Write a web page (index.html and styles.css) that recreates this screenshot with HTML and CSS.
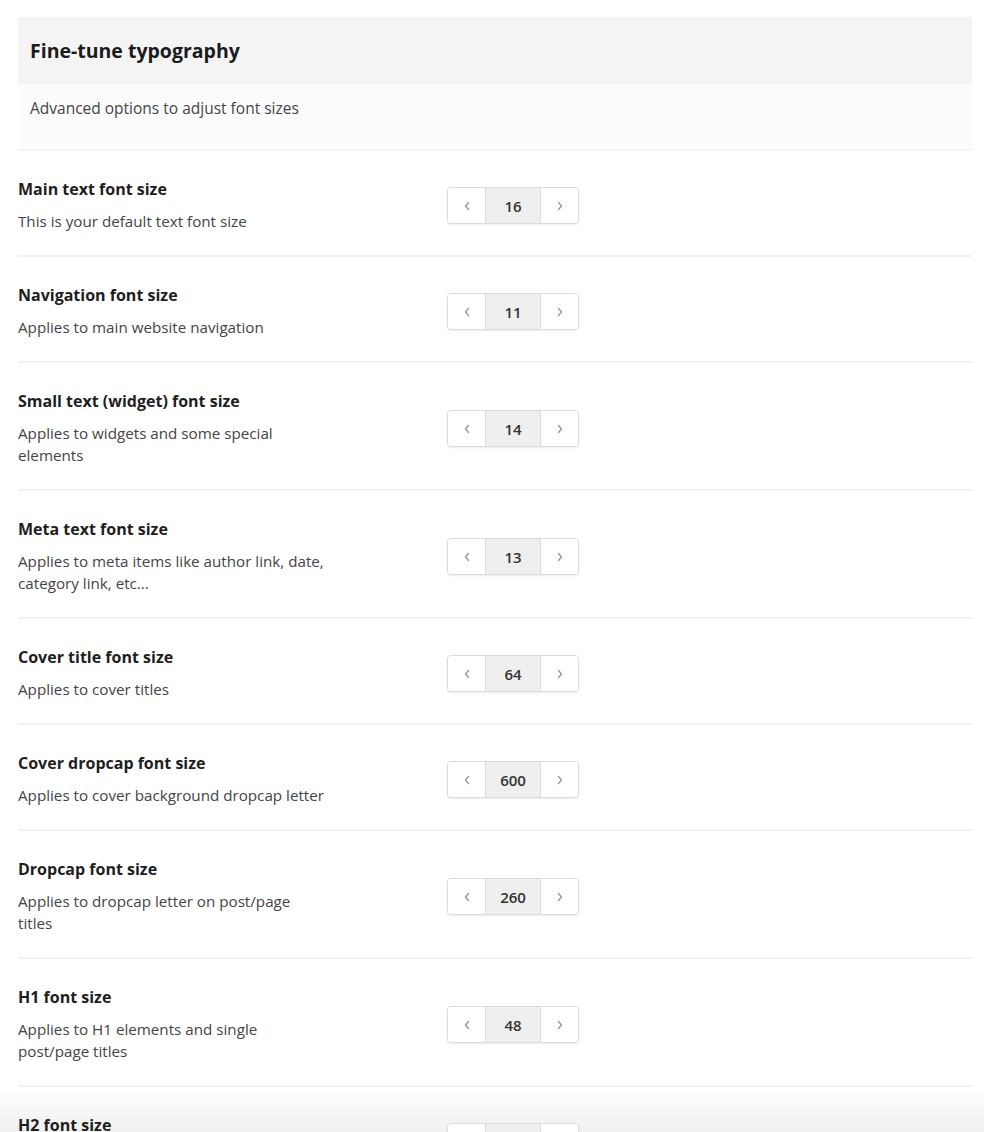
FILE: index.html
```html
<!DOCTYPE html>
<html lang="en">
<head>
<meta charset="utf-8">
<title>Fine-tune typography</title>
<link rel="stylesheet" href="styles.css">
</head>
<body>
<section class="panel">
  <header class="panel-head">
    <h2 class="panel-title">Fine-tune typography</h2>
  </header>
  <p class="panel-intro">Advanced options to adjust font sizes</p>

  <div class="setting">
    <div class="setting-text">
      <h3 class="setting-name">Main text font size</h3>
      <p class="setting-desc">This is your default text font size</p>
    </div>
    <div class="stepper">
      <button class="step-btn" aria-label="Decrease"><svg viewBox="0 0 8 10" class="chev"><path d="M5.5 1.5 L2.5 5 L5.5 8.5"/></svg></button>
      <span class="step-value">16</span>
      <button class="step-btn" aria-label="Increase"><svg viewBox="0 0 8 10" class="chev"><path d="M2.5 1.5 L5.5 5 L2.5 8.5"/></svg></button>
    </div>
  </div>

  <div class="setting">
    <div class="setting-text">
      <h3 class="setting-name">Navigation font size</h3>
      <p class="setting-desc">Applies to main website navigation</p>
    </div>
    <div class="stepper">
      <button class="step-btn" aria-label="Decrease"><svg viewBox="0 0 8 10" class="chev"><path d="M5.5 1.5 L2.5 5 L5.5 8.5"/></svg></button>
      <span class="step-value">11</span>
      <button class="step-btn" aria-label="Increase"><svg viewBox="0 0 8 10" class="chev"><path d="M2.5 1.5 L5.5 5 L2.5 8.5"/></svg></button>
    </div>
  </div>

  <div class="setting">
    <div class="setting-text">
      <h3 class="setting-name">Small text (widget) font size</h3>
      <p class="setting-desc">Applies to widgets and some special elements</p>
    </div>
    <div class="stepper">
      <button class="step-btn" aria-label="Decrease"><svg viewBox="0 0 8 10" class="chev"><path d="M5.5 1.5 L2.5 5 L5.5 8.5"/></svg></button>
      <span class="step-value">14</span>
      <button class="step-btn" aria-label="Increase"><svg viewBox="0 0 8 10" class="chev"><path d="M2.5 1.5 L5.5 5 L2.5 8.5"/></svg></button>
    </div>
  </div>

  <div class="setting">
    <div class="setting-text">
      <h3 class="setting-name">Meta text font size</h3>
      <p class="setting-desc">Applies to meta items like author link, date, category link, etc...</p>
    </div>
    <div class="stepper">
      <button class="step-btn" aria-label="Decrease"><svg viewBox="0 0 8 10" class="chev"><path d="M5.5 1.5 L2.5 5 L5.5 8.5"/></svg></button>
      <span class="step-value">13</span>
      <button class="step-btn" aria-label="Increase"><svg viewBox="0 0 8 10" class="chev"><path d="M2.5 1.5 L5.5 5 L2.5 8.5"/></svg></button>
    </div>
  </div>

  <div class="setting">
    <div class="setting-text">
      <h3 class="setting-name">Cover title font size</h3>
      <p class="setting-desc">Applies to cover titles</p>
    </div>
    <div class="stepper">
      <button class="step-btn" aria-label="Decrease"><svg viewBox="0 0 8 10" class="chev"><path d="M5.5 1.5 L2.5 5 L5.5 8.5"/></svg></button>
      <span class="step-value">64</span>
      <button class="step-btn" aria-label="Increase"><svg viewBox="0 0 8 10" class="chev"><path d="M2.5 1.5 L5.5 5 L2.5 8.5"/></svg></button>
    </div>
  </div>

  <div class="setting">
    <div class="setting-text">
      <h3 class="setting-name">Cover dropcap font size</h3>
      <p class="setting-desc">Applies to cover background dropcap letter</p>
    </div>
    <div class="stepper">
      <button class="step-btn" aria-label="Decrease"><svg viewBox="0 0 8 10" class="chev"><path d="M5.5 1.5 L2.5 5 L5.5 8.5"/></svg></button>
      <span class="step-value">600</span>
      <button class="step-btn" aria-label="Increase"><svg viewBox="0 0 8 10" class="chev"><path d="M2.5 1.5 L5.5 5 L2.5 8.5"/></svg></button>
    </div>
  </div>

  <div class="setting">
    <div class="setting-text">
      <h3 class="setting-name">Dropcap font size</h3>
      <p class="setting-desc">Applies to dropcap letter on post/page titles</p>
    </div>
    <div class="stepper">
      <button class="step-btn" aria-label="Decrease"><svg viewBox="0 0 8 10" class="chev"><path d="M5.5 1.5 L2.5 5 L5.5 8.5"/></svg></button>
      <span class="step-value">260</span>
      <button class="step-btn" aria-label="Increase"><svg viewBox="0 0 8 10" class="chev"><path d="M2.5 1.5 L5.5 5 L2.5 8.5"/></svg></button>
    </div>
  </div>

  <div class="setting">
    <div class="setting-text">
      <h3 class="setting-name">H1 font size</h3>
      <p class="setting-desc">Applies to H1 elements and single post/page titles</p>
    </div>
    <div class="stepper">
      <button class="step-btn" aria-label="Decrease"><svg viewBox="0 0 8 10" class="chev"><path d="M5.5 1.5 L2.5 5 L5.5 8.5"/></svg></button>
      <span class="step-value">48</span>
      <button class="step-btn" aria-label="Increase"><svg viewBox="0 0 8 10" class="chev"><path d="M2.5 1.5 L5.5 5 L2.5 8.5"/></svg></button>
    </div>
  </div>

  <div class="setting">
    <div class="setting-text">
      <h3 class="setting-name">H2 font size</h3>
      <p class="setting-desc">Applies to H2 elements</p>
    </div>
    <div class="stepper">
      <button class="step-btn" aria-label="Decrease"><svg viewBox="0 0 8 10" class="chev"><path d="M5.5 1.5 L2.5 5 L5.5 8.5"/></svg></button>
      <span class="step-value">36</span>
      <button class="step-btn" aria-label="Increase"><svg viewBox="0 0 8 10" class="chev"><path d="M2.5 1.5 L5.5 5 L2.5 8.5"/></svg></button>
    </div>
  </div>
</section>
</body>
</html>
```
FILE: styles.css
```css
html {
  height: 100%;
  background-color: #ffffff;
  background-image: linear-gradient(to bottom, rgba(240, 240, 240, 0), rgba(240, 240, 240, 1));
  background-repeat: no-repeat;
  background-size: 100% 46px;
  background-position: left bottom;
}

body {
  margin: 0;
  height: 100%;
  font-family: "Open Sans", "Noto Sans", "Liberation Sans", sans-serif;
  color: #222;
  padding: 17px 12px 0 18px;
  box-sizing: border-box;
  overflow: hidden;
}

.panel {
  width: 954px;
}

.panel-head {
  background: #f4f4f4;
  height: 67px;
  display: flex;
  align-items: center;
  padding: 0 12px;
  border-radius: 2px 2px 0 0;
}

.panel-title {
  margin: 0;
  font-size: 19.5px;
  font-weight: 700;
  color: #1b1b1b;
}

.panel-intro {
  margin: 0;
  background: #fcfcfc;
  box-sizing: border-box;
  height: 67px;
  padding: 13px 12px 0;
  font-size: 15.5px;
  line-height: 22px;
  color: #444;
  border-bottom: 2px solid #f3f3f3;
}

.setting {
  display: flex;
  align-items: center;
  padding: 28px 0 23px;
  border-bottom: 2px solid #f2f2f2;
}

.setting-text {
  width: 429px;
  flex: none;
}

.setting-name {
  margin: 0;
  font-size: 16px;
  line-height: 20px;
  font-weight: 700;
  color: #1e1e1e;
}

.setting-desc {
  margin: 11px 0 0;
  max-width: 308px;
  font-size: 15.2px;
  line-height: 22px;
  color: #444;
}

.stepper {
  display: flex;
  height: 37px;
  width: 132px;
  box-sizing: border-box;
  border: 1px solid #dcdcdc;
  border-radius: 4px;
  box-shadow: 0 1px 2px rgba(0, 0, 0, 0.08);
  overflow: hidden;
  background: #fff;
}

.step-btn {
  width: 37px;
  flex: none;
  border: 0;
  padding: 0;
  margin: 0;
  background: #fff;
  display: flex;
  align-items: center;
  justify-content: center;
  cursor: pointer;
}

.chev {
  width: 8px;
  height: 10px;
  fill: none;
  stroke: #999;
  stroke-width: 1.4;
  stroke-linecap: round;
  stroke-linejoin: round;
}

.step-value {
  flex: 1;
  background: #efefef;
  border-left: 1px solid #dcdcdc;
  border-right: 1px solid #dcdcdc;
  display: flex;
  align-items: center;
  justify-content: center;
  font-size: 15px;
  font-weight: 600;
  color: #333;
}
```
